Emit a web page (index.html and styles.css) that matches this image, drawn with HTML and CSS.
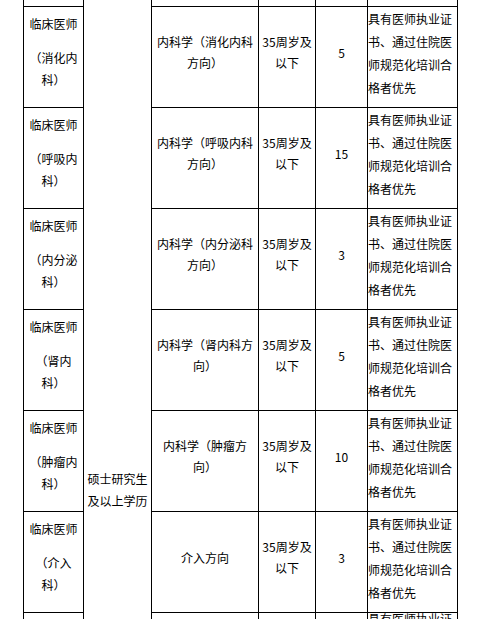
FILE: index.html
```html
<!DOCTYPE html>
<html lang="zh-CN">
<head>
<meta charset="utf-8">
<title>招聘岗位表</title>
<link rel="stylesheet" href="styles.css">
</head>
<body>
<div class="page">
  <div class="grid">
    <div class="cell top c1"></div>
    <div class="cell edu"><div class="edu-text">硕士研究生及以上学历</div></div>
    <div class="cell top c3"></div>
    <div class="cell top c4"></div>
    <div class="cell top c5"></div>
    <div class="cell top c6"></div>

    <div class="cell post"><div class="post-title">临床医师</div><div class="post-dept">（消化内科）</div></div>
    <div class="cell major">内科学（消化内科方向）</div>
    <div class="cell age">35周岁及以下</div>
    <div class="cell num">5</div>
    <div class="cell req">具有医师执业证书、通过住院医师规范化培训合格者优先</div>

    <div class="cell post"><div class="post-title">临床医师</div><div class="post-dept">（呼吸内科）</div></div>
    <div class="cell major">内科学（呼吸内科方向）</div>
    <div class="cell age">35周岁及以下</div>
    <div class="cell num">15</div>
    <div class="cell req">具有医师执业证书、通过住院医师规范化培训合格者优先</div>

    <div class="cell post"><div class="post-title">临床医师</div><div class="post-dept">（内分泌科）</div></div>
    <div class="cell major">内科学（内分泌科方向）</div>
    <div class="cell age">35周岁及以下</div>
    <div class="cell num">3</div>
    <div class="cell req">具有医师执业证书、通过住院医师规范化培训合格者优先</div>

    <div class="cell post"><div class="post-title">临床医师</div><div class="post-dept">（肾内科）</div></div>
    <div class="cell major">内科学（肾内科方向）</div>
    <div class="cell age">35周岁及以下</div>
    <div class="cell num">5</div>
    <div class="cell req">具有医师执业证书、通过住院医师规范化培训合格者优先</div>

    <div class="cell post"><div class="post-title">临床医师</div><div class="post-dept">（肿瘤内科）</div></div>
    <div class="cell major">内科学（肿瘤方<br>向）</div>
    <div class="cell age">35周岁及以下</div>
    <div class="cell num">10</div>
    <div class="cell req">具有医师执业证书、通过住院医师规范化培训合格者优先</div>

    <div class="cell post"><div class="post-title">临床医师</div><div class="post-dept">（介入科）</div></div>
    <div class="cell major">介入方向</div>
    <div class="cell age">35周岁及以下</div>
    <div class="cell num">3</div>
    <div class="cell req">具有医师执业证书、通过住院医师规范化培训合格者优先</div>

    <div class="cell post"></div>
    <div class="cell major"></div>
    <div class="cell age"></div>
    <div class="cell num"></div>
    <div class="cell req last">具有医师执业证书</div>
  </div>
</div>
</body>
</html>
```

FILE: styles.css
```css
html, body {
  margin: 0;
  padding: 0;
  background: #fff;
}

.page {
  height: 619px;
  overflow: hidden;
  font-family: "Noto Sans CJK SC", "Noto Sans", sans-serif;
  font-size: 12px;
  color: #000;
}

.grid {
  margin-left: 23px;
  width: 435px;
  box-sizing: border-box;
  display: grid;
  grid-template-columns: 59px 67px 106px 56px 51px 89px;
  grid-template-rows: 6px repeat(6, 100px) 6px;
  gap: 1px;
  padding: 0 1px;
  background: #000;
}

.cell {
  background: #fff;
  display: flex;
  flex-direction: column;
  justify-content: center;
  align-items: center;
  text-align: center;
  padding-bottom: 10px;
  box-sizing: border-box;
  min-width: 0;
}

.cell.top {
  padding: 0;
}

.c1, .post { grid-column: 1; }
.c3, .major { grid-column: 3; }
.c4, .age { grid-column: 4; }
.c5, .num { grid-column: 5; }
.c6, .req { grid-column: 6; }

.edu {
  grid-column: 2;
  grid-row: 1 / -1;
  justify-content: flex-start;
  padding: 468px 0 0 0;
  line-height: 22px;
}

.edu-text {
  width: 60px;
}

.post {
  line-height: 22px;
}

.post-title {
  margin-bottom: 12px;
}

.post-dept {
  max-width: 50px;
}

.major,
.age,
.num {
  line-height: 21px;
}

.req {
  align-items: stretch;
  text-align: left;
  line-height: 23px;
  padding-bottom: 9px;
}

.req.last {
  justify-content: flex-start;
  padding: 0;
  overflow: hidden;
  line-height: 11px;
  align-items: flex-start;
}
```
